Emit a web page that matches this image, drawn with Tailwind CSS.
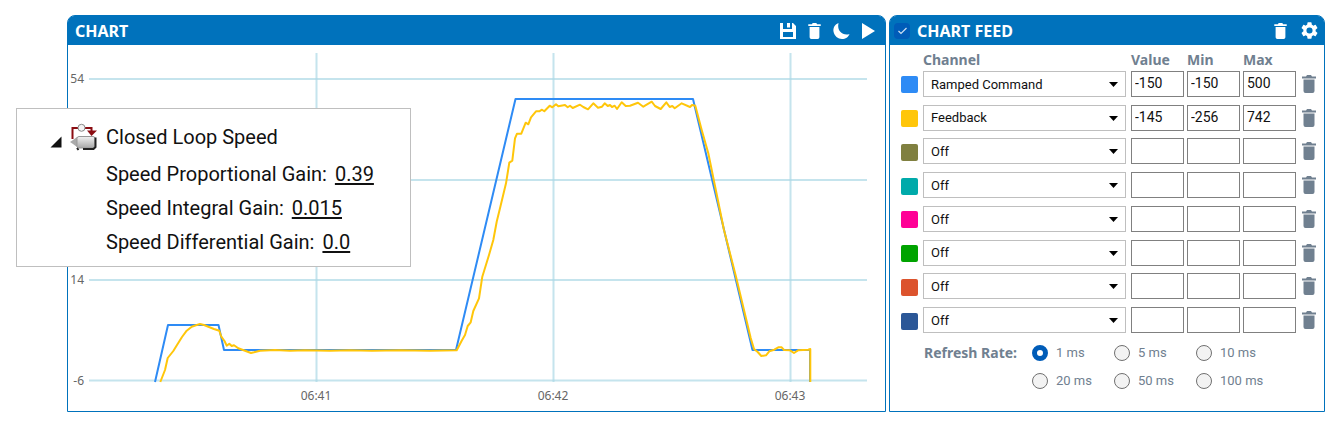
<!DOCTYPE html>
<html lang="en">
<head>
    <meta charset="UTF-8">
    <meta name="viewport" content="width=device-width, initial-scale=1.0">
    <title>Chart</title>
    <script src="https://cdn.jsdelivr.net/npm/@tailwindcss/browser@4"></script>
</head>
<body class="bg-white font-['Noto_Sans',sans-serif]">
    <!-- Shared icons -->
    <svg class="hidden" xmlns="http://www.w3.org/2000/svg">
        <symbol id="trash" viewBox="0 0 14 18">
            <path d="M0 1.500h4L5 0h4l1 1.500h4v2H0zM1.500 4.500h11V16a2 2 0 0 1-2 2h-7a2 2 0 0 1-2-2z"/>
        </symbol>
    </svg>

    <main class="relative flex gap-[3px] pt-[15px] pl-[67px] pr-[5px]">
        <!-- Chart -->
        <section class="flex-1 min-w-0 border border-[#0072bc] rounded-t-lg">
            <header class="flex items-center h-[29px] pl-[7px] pr-[10px] bg-[#0072bc] text-white rounded-t-md">
                <h2 class="flex-1 text-[16px] font-bold">CHART</h2>
                <div class="flex items-center gap-[12px]">
                    <button type="button" aria-label="Save">
                        <svg class="block w-[16px] h-[16px]" viewBox="0 0 16 16" fill="currentColor">
                            <path fill-rule="evenodd" d="M0 0h3v6h9V0h1l3 3v13H0zM3 9v5h10V9z"/>
                            <path d="M7 0h3v4.500H7z"/>
                        </svg>
                    </button>
                    <button type="button" aria-label="Clear chart">
                        <svg class="block w-[13px] h-[16px]" fill="currentColor"><use href="#trash"/></svg>
                    </button>
                    <button type="button" aria-label="Dark mode">
                        <svg class="block w-[17px] h-[16px]" viewBox="0 0 17 16" fill="currentColor">
                            <path d="M5.500 0C1.500 1.500 0 5 .5 8.500 1.200 13 5 16 9 16c3.500 0 6.500-2 7.500-5C11 13 3.500 9 5.500 0z"/>
                        </svg>
                    </button>
                    <button type="button" aria-label="Run">
                        <svg class="block w-[13px] h-[16px]" viewBox="0 0 13 16" fill="currentColor"><path d="M0 0l13 8-13 8z"/></svg>
                    </button>
                </div>
            </header>

            <svg class="block w-full h-auto" viewBox="68 45 817 365" fill="none">
                <g stroke="#add8e6" stroke-opacity=".7" stroke-width="2">
                    <path d="M89 79H867M89 180H867M89 280H867M89 380.500H867"/>
                    <path d="M316.500 53V382M553.500 53V382M790.500 53V382"/>
                </g>
                <g class="text-[12px] font-['Noto_Sans',sans-serif]" fill="#666">
                    <text x="84" y="83" text-anchor="end">54</text>
                    <text x="84" y="284" text-anchor="end">14</text>
                    <text x="84" y="385" text-anchor="end">-6</text>
                    <text x="316" y="400" text-anchor="middle">06:41</text>
                    <text x="553" y="400" text-anchor="middle">06:42</text>
                    <text x="790" y="400" text-anchor="middle">06:43</text>
                </g>
                <g stroke-width="2" stroke-linejoin="round">
                    <!-- Ramped command -->
                    <polyline stroke="#2e8bf5" points="155,382 168,325 218.500,325 224,350 456,350 515.500,99 693,99 752.500,350 810,350 810,382"/>
                    <!-- Feedback -->
                    <polyline stroke="#ffc60a" points="160.300,382 165,370 167.700,358 173.300,351 177,345 182,337 186.700,330.700 191.700,326.700 196,325.200 200,324 204,325 208.300,326.700 214,329 219.300,330.700 221.300,336.700 224.500,341 226.700,345.700 229.300,343.700 231.700,346 234,345.200 238.300,348.300 245,350.700 251,353 254,352.300 260,350.700 275,350 290,350.800 305,350.300 330,350.700 350,350.200 372,350.700 400,350.200 430,350.700 456.700,350.300 461.700,340.700 465,335 467.700,326 470.700,322.300 473.300,311 479,298.300 482.300,276.700 489,255 493.300,240 496.700,221.700 500,208.300 506,183.300 509.300,162.700 512.300,160.700 515,138.300 517,133.700 521.300,133.700 525.700,122.700 528.300,124.300 531,117.300 536,111.300 539.300,111.300 542,109.700 544.300,111.300 549.700,105.700 552.300,107.300 556,104.300 558.300,106.300 565,105 567.700,107.300 570,105.700 572.700,108 580,104.700 583.300,107 588,109.300 593.300,103.300 598,107.700 602,106.700 604.700,103.300 607.700,106 610,105 612,107 614.700,105.700 617,109 621.700,102.300 625.700,106 630,105.700 638,102.700 643.300,106.700 651.700,101.700 655,106 660.700,109 666.300,102.300 669.700,107 672.300,106 674.700,108.300 681.700,103.300 690,107 692,105 695.300,105.700 701.700,130 708.300,153.300 724,230 736,276.700 750.700,338 754,349 757.700,352 761.300,356 766,355.300 769.300,351.300 774.300,349.700 778.300,347.300 781.700,347.300 784,350 790,350.300 794,353 798,350.300 808.300,349.700 810.300,349 810.300,382"/>
                </g>
            </svg>
        </section>

        <!-- Chart feed -->
        <section class="w-[436px] shrink-0 border border-[#0072bc] rounded-t-lg">
            <header class="flex items-center h-[29px] pl-[4px] pr-[6px] bg-[#0072bc] text-white rounded-t-md">
                <span class="relative flex mr-[7px]">
                    <input type="checkbox" id="feedToggle" checked class="appearance-none w-[16px] h-[16px] rounded-sm bg-[#005cb8]">
                    <svg class="absolute top-[4px] left-[4px] w-[9px] h-[8px] pointer-events-none" viewBox="0 0 9 8" fill="none" stroke="#cfe0f2" stroke-width="1.200"><path d="M.5 4l2.500 2.500L8.500 1"/></svg>
                </span>
                <h2 class="flex-1 text-[16px] font-bold"><label for="feedToggle">CHART FEED</label></h2>
                <div class="flex items-center gap-[14px]">
                    <button type="button" aria-label="Clear feed">
                        <svg class="block w-[13px] h-[16px]" fill="currentColor"><use href="#trash"/></svg>
                    </button>
                    <button type="button" aria-label="Settings">
                        <svg class="block w-[17px] h-[17px]" viewBox="2 2 20 20" fill="currentColor">
                            <path d="M19.140 12.940c.04-.3.060-.610.060-.940 0-.320-.020-.640-.070-.940l2.030-1.580a.49.49 0 0 0 .12-.610l-1.920-3.320a.49.49 0 0 0-.59-.220l-2.390.960a7 7 0 0 0-1.620-.940l-.360-2.540a.48.48 0 0 0-.480-.410h-3.840a.48.48 0 0 0-.470.410l-.360 2.540c-.590.240-1.130.570-1.620.940l-2.390-.960a.48.48 0 0 0-.590.220L2.740 8.870a.48.48 0 0 0 .12.610l2.030 1.580c-.050.3-.090.630-.090.940s.020.640.070.940l-2.030 1.580a.49.49 0 0 0-.12.610l1.920 3.320c.12.220.370.290.590.220l2.390-.960c.5.380 1.030.7 1.620.940l.360 2.540c.050.240.240.410.480.410h3.840c.240 0 .440-.170.470-.410l.360-2.540a7 7 0 0 0 1.620-.940l2.390.960c.220.080.470 0 .590-.220l1.920-3.320a.48.48 0 0 0-.12-.610zM12 15.600a3.600 3.600 0 1 1 0-7.200 3.600 3.600 0 0 1 0 7.200z"/>
                        </svg>
                    </button>
                </div>
            </header>

            <div class="pt-[7px] pl-[11px] pr-[7px] pb-[16px]">
                <table class="w-full h-[285px] table-fixed border-collapse">
                    <thead>
                        <tr class="h-[15px] text-left text-[14px] leading-[15px] text-[#708090]">
                            <th class="w-[22px]"></th>
                            <th>Channel</th>
                            <th class="w-[56px]">Value</th>
                            <th class="w-[56px]">Min</th>
                            <th class="w-[56px]">Max</th>
                            <th class="w-[18px]"></th>
                        </tr>
                    </thead>
                    <tbody id="channels"></tbody>
                </table>

                <div role="radiogroup" aria-labelledby="rateLabel" class="flex pt-[2px] pl-[23px] text-[#708090]">
                    <span id="rateLabel" class="w-[108px] text-[14px] leading-[28px] font-bold">Refresh Rate:</span>
                    <div id="rates" class="grid grid-cols-[82px_82px_82px] text-[13px] leading-[28px] font-[Roboto,sans-serif]"></div>
                </div>
            </div>
        </section>

        <!-- Loop gains -->
        <aside class="absolute top-[108px] left-[16px] w-[395px] h-[159px] pt-[11px] pl-[33px] bg-white border border-[#bfbfbf] text-[20px] text-[#111] font-[Roboto,sans-serif]">
            <div class="flex items-center h-[34px]">
                <svg class="w-[12px] h-[12px] mt-[10px]" viewBox="0 0 12 12"><path d="M11.500.5v11H.5z" fill="#111"/></svg>
                <svg class="w-[28px] h-[28px] ml-[8px] mr-[8px]" viewBox="0 0 28 28" fill="none">
                    <defs>
                        <linearGradient id="motor" x2="0" y2="1">
                            <stop stop-color="#f2f2f2"/>
                            <stop offset="1" stop-color="#a8a8a8"/>
                        </linearGradient>
                    </defs>
                    <path d="M2.500 16V5H8M15 5h6.500v3" stroke="#8b0d12" stroke-width="2"/>
                    <path d="M17 7.500h10L21.500 13z" fill="#8b0d12"/>
                    <circle cx="11.500" cy="4.800" r="3.500" fill="#f4f4f4" stroke="#888"/>
                    <path d="M0 19l3-2 4-3v10l-4-3z" fill="#aaa"/>
                    <rect x="7" y="13.500" width="18" height="11.500" rx="2" fill="url(#motor)" stroke="#999"/>
                    <path d="M25.500 14.500V24l-2 2H13M7 25l1.500 2" stroke="#222" stroke-width="2"/>
                </svg>
                <h3>Closed Loop Speed</h3>
            </div>
            <dl class="pl-[56px] leading-[34px] pt-[3px]">
                <div class="flex gap-[8px]"><dt>Speed Proportional Gain:</dt><dd><a href="#" class="underline decoration-2 underline-offset-2">0.39</a></dd></div>
                <div class="flex gap-[8px]"><dt>Speed Integral Gain:</dt><dd><a href="#" class="underline decoration-2 underline-offset-2">0.015</a></dd></div>
                <div class="flex gap-[8px]"><dt>Speed Differential Gain:</dt><dd><a href="#" class="underline decoration-2 underline-offset-2">0.0</a></dd></div>
            </dl>
        </aside>
    </main>

    <script>
        const channels = [
            { color: '#2e8bf5', name: 'Ramped Command', values: ['-150', '-150', '500'] },
            { color: '#ffc60a', name: 'Feedback', values: ['-145', '-256', '742'] },
            { color: '#808040', name: 'Off', values: ['', '', ''] },
            { color: '#00aaaa', name: 'Off', values: ['', '', ''] },
            { color: '#ff0096', name: 'Off', values: ['', '', ''] },
            { color: '#00a300', name: 'Off', values: ['', '', ''] },
            { color: '#dc532d', name: 'Off', values: ['', '', ''] },
            { color: '#2b5797', name: 'Off', values: ['', '', ''] }
        ];
        const labels = ['Value', 'Min', 'Max'];

        // Channel rows
        document.getElementById('channels').innerHTML = channels.map(function(ch, i) {
            const inputs = ch.values.map(function(v, j) {
                return `<td><input type="text" value="${v}" aria-label="${labels[j]} ${i + 1}"
                    class="block w-[53px] h-[26px] px-[3px] pb-[2px] border border-[#808080] text-[14px] text-[#111] font-[Roboto,sans-serif]"></td>`;
            }).join('');
            return `<tr>
                <td><span class="block w-[17px] h-[17px] mt-[2px] rounded-xs" style="background:${ch.color}"></span></td>
                <td class="pr-[5px]">
                    <div class="relative">
                        <select aria-label="Channel ${i + 1}" class="block appearance-none w-full h-[26px] px-[7px] pt-[1px] bg-white border border-[#bfbfbf] text-[13px] text-[#111] font-[Roboto,sans-serif]">
                            <option>${ch.name}</option>
                        </select>
                        <svg class="absolute top-[11px] right-[8px] w-[9px] h-[5px] pointer-events-none" viewBox="0 0 9 5"><path d="M0 0h9L4.500 5z"/></svg>
                    </div>
                </td>
                ${inputs}
                <td><button type="button" aria-label="Remove channel ${i + 1}" class="block ml-[3px] text-[#708090]">
                    <svg class="block w-[14px] h-[18px]" fill="currentColor"><use href="#trash"/></svg>
                </button></td>
            </tr>`;
        }).join('');

        // Refresh rate options
        document.getElementById('rates').innerHTML = [1, 5, 10, 20, 50, 100].map(function(ms) {
            return `<label class="flex items-center gap-[8px] whitespace-nowrap">
                <input type="radio" name="rate" value="${ms}" ${ms === 1 ? 'checked' : ''}
                    class="appearance-none w-[16px] h-[16px] rounded-full border border-[#707070] bg-[#f3f3f3] checked:border-[5px] checked:border-[#005cb8] checked:bg-white">
                ${ms} ms
            </label>`;
        }).join('');
    </script>
</body>
</html>
